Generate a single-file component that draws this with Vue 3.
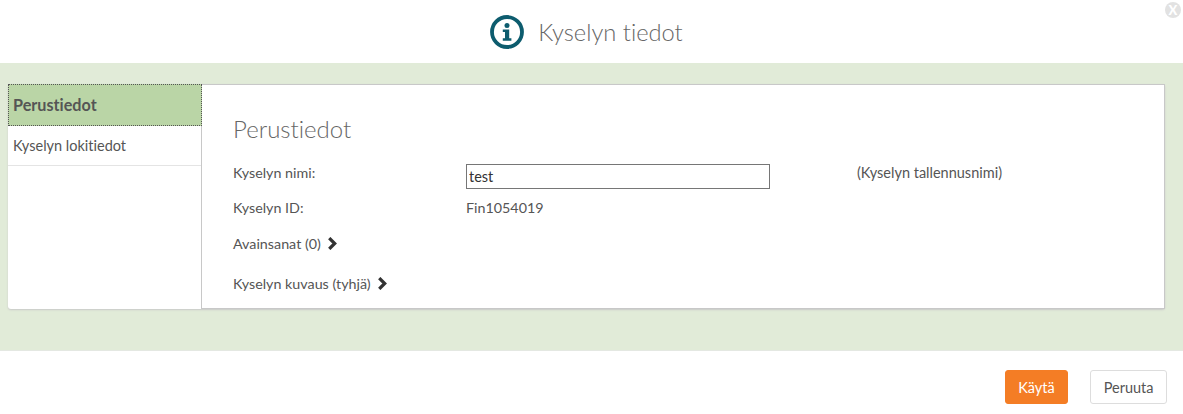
<template>
  <div class="dialog">
    <!-- Otsikko -->
    <header class="dialog-header">
      <svg class="info-icon" viewBox="0 0 34 34" width="34" height="34">
        <circle cx="17" cy="17" r="15" fill="none" stroke="#0d5c6e" stroke-width="3.8" />
        <circle cx="17" cy="10.4" r="2.5" fill="#0d5c6e" />
        <path d="M12.8 14.4h6.4v8.8h2.2v2.6h-8.6v-2.6h2.2v-6.2h-2.2z" fill="#0d5c6e" />
      </svg>
      <h1>Kyselyn tiedot</h1>
      <span class="close-btn">X</span>
    </header>

    <!-- Sisältö -->
    <main class="dialog-body">
      <div class="panel">
        <ul class="side-menu">
          <li
            v-for="(item, index) in menuItems"
            :key="item"
            class="side-item"
            :class="{ active: index === activeIndex }"
            @click="activeIndex = index"
          >
            {{ item }}
          </li>
        </ul>

        <section class="content">
          <h2>Perustiedot</h2>
          <div class="row row-name">
            <label>Kyselyn nimi:</label>
            <input v-model="surveyName" type="text" />
            <span class="hint">(Kyselyn tallennusnimi)</span>
          </div>
          <div class="row row-id">
            <label>Kyselyn ID:</label>
            <span>Fin1054019</span>
          </div>
          <div class="expander expander-keywords">
            Avainsanat (0)
            <svg viewBox="0 0 10 12" width="11" height="13"><path d="M2 1l5 5-5 5" fill="none" stroke="#333" stroke-width="3" /></svg>
          </div>
          <div class="expander expander-desc">
            Kyselyn kuvaus (tyhjä)
            <svg viewBox="0 0 10 12" width="11" height="13"><path d="M2 1l5 5-5 5" fill="none" stroke="#333" stroke-width="3" /></svg>
          </div>
        </section>
      </div>
    </main>

    <!-- Painikkeet -->
    <footer class="dialog-footer">
      <button class="btn btn-primary">Käytä</button>
      <button class="btn">Peruuta</button>
    </footer>
  </div>
</template>

<script setup>
import { ref } from 'vue';

const menuItems = ['Perustiedot', 'Kyselyn lokitiedot'];
const activeIndex = ref(0);
const surveyName = ref('test');
</script>

<style>
html, body {
  margin: 0;
  background: #fff;
}
</style>

<style scoped>
.dialog {
  width: 1183px;
  height: 414px;
  display: flex;
  flex-direction: column;
  font-family: Lato, "Liberation Sans", sans-serif;
  font-size: 14.3px;
  font-variant-ligatures: none;
  color: #555;
  background: #fff;
}

.dialog-header {
  position: relative;
  height: 63px;
  display: flex;
  align-items: center;
  justify-content: center;
  gap: 14px;
  padding-right: 10px;
  box-sizing: border-box;
}

h1 {
  margin: 0;
  font-size: 23.7px;
  font-weight: 300;
  color: #666;
}

.close-btn {
  position: absolute;
  top: 2px;
  right: 2px;
  width: 16px;
  height: 16px;
  border-radius: 50%;
  background: #e2e2e2;
  color: #fff;
  font-size: 13px;
  font-weight: 900;
  line-height: 16px;
  text-align: center;
}

.dialog-body {
  height: 288px;
  box-sizing: border-box;
  padding: 21px 18px 0 8px;
  background: #e1ebd8;
  border-bottom: 1px solid #e4e8e2;
}

.panel {
  height: 225px;
  display: flex;
  background: #fff;
  border-radius: 3px;
  box-shadow: 0 1px 2px #c8c8c8;
}

.side-menu {
  width: 193px;
  flex-shrink: 0;
  margin: 0;
  padding: 0;
  list-style: none;
}

.side-item {
  height: 40px;
  box-sizing: border-box;
  display: flex;
  align-items: center;
  padding-left: 5px;
  border-bottom: 1px solid #e4e4e4;
  font-size: 14.5px;
  cursor: pointer;
}

.side-item.active {
  position: relative;
  height: 42px;
  margin-right: -1px;
  padding-left: 4px;
  padding-bottom: 2px;
  background: #bad5a6;
  border: 1px dotted #555;
  font-size: 16.2px;
  font-weight: 700;
  color: #555;
}

.content {
  flex: 1;
  box-sizing: border-box;
  padding: 30px 31px 0;
  border: 1px solid #c8c8c8;
}

h2 {
  margin: 0;
  font-size: 24px;
  font-weight: 300;
  line-height: 28px;
  color: #666;
}

.row {
  display: flex;
  align-items: flex-start;
  line-height: 18px;
}

.row label {
  width: 233px;
  flex-shrink: 0;
}

.row-name {
  margin-top: 21px;
}

.row-id {
  margin-top: 10px;
}

.hint {
  font-size: 14.5px;
}

input {
  width: 304px;
  height: 25px;
  box-sizing: border-box;
  margin-right: 87px;
  padding: 1px 2px;
  border: 1px solid #767676;
  font-family: Lato, "Liberation Sans", sans-serif;
  font-size: 14.5px;
  color: #333;
  outline: none;
}

.expander {
  display: flex;
  align-items: center;
  gap: 6px;
}

.expander-keywords {
  margin-top: 18px;
}

.expander-desc {
  margin-top: 23px;
}

.dialog-footer {
  flex: 1;
  display: flex;
  justify-content: flex-end;
  align-items: flex-start;
  gap: 22px;
  padding: 19px 16px 0 0;
}

.btn {
  height: 34px;
  padding: 0 12.5px;
  background: #fff;
  border: 1px solid #ddd;
  border-radius: 3px;
  font-family: Lato, "Liberation Sans", sans-serif;
  font-size: 14.5px;
  color: #555;
}

.btn-primary {
  background: #f47d25;
  border-color: #f47d25;
  color: #fff;
}
</style>
